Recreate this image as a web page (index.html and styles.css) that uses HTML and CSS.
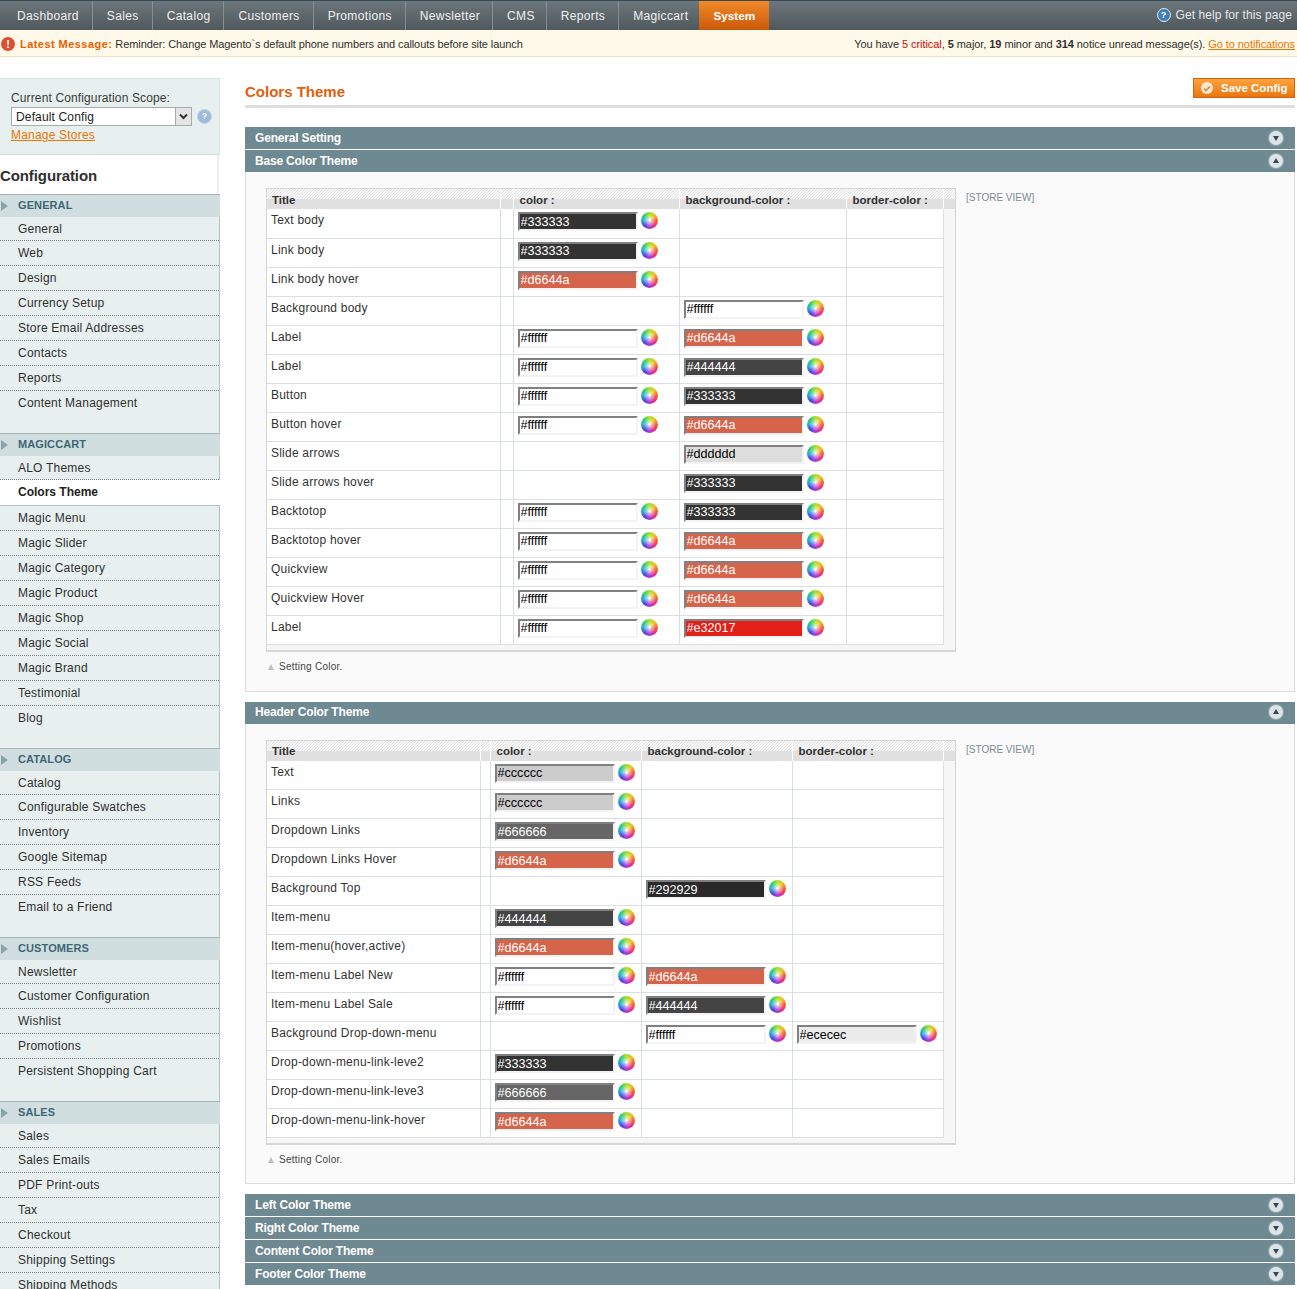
FILE: index.html
```html
<!DOCTYPE html>
<html>
<head>
  <title>Colors Theme / Configuration</title>
  <link rel="stylesheet" href="styles.css">
</head>
<body>
<div class="page">
  <div class="nav-bar">
    <ul class="nav-menu">
      <li>Dashboard</li>
      <li>Sales</li>
      <li>Catalog</li>
      <li>Customers</li>
      <li>Promotions</li>
      <li>Newsletter</li>
      <li>CMS</li>
      <li>Reports</li>
      <li>Magiccart</li>
      <li class="active">System</li>
    </ul>
    <div class="nav-help">
      <span class="help-icon">?</span>
      <span>Get help for this page</span>
    </div>
  </div>

  <div class="notice-bar">
    <div class="notice-left">
      <span class="notice-icon">!</span>
      <strong class="notice-title">Latest Message:</strong>
      <span>Reminder: Change Magento`s default phone numbers and callouts before site launch</span>
    </div>
    <div class="notice-right">
      You have <strong class="critical">5 critical</strong>, <strong>5</strong> major, <strong>19</strong> minor and <strong>314</strong> notice unread message(s). <a href="#">Go to notifications</a>
    </div>
  </div>

  <div class="columns">
    <div class="sidebar">
      <div class="scope-box">
        <div class="scope-label">Current Configuration Scope:</div>
        <div class="scope-row">
          <div class="scope-select">
            <span class="scope-value">Default Config</span>
            <span class="scope-arrow">
              <svg width="9" height="7" viewBox="0 0 9 7"><path d="M1 1.5l3.5 3.5 3.5-3.5" fill="none" stroke="#333" stroke-width="2"/></svg>
            </span>
          </div>
          <span class="scope-help">?</span>
        </div>
        <a class="scope-link" href="#">Manage Stores</a>
      </div>

      <h3 class="side-title">Configuration</h3>

      <div class="side-group">
        <h4 class="side-head">GENERAL</h4>
        <ul class="side-list">
          <li>General</li>
          <li>Web</li>
          <li>Design</li>
          <li>Currency Setup</li>
          <li>Store Email Addresses</li>
          <li>Contacts</li>
          <li>Reports</li>
          <li>Content Management</li>
        </ul>
      </div>

      <div class="side-group">
        <h4 class="side-head">MAGICCART</h4>
        <ul class="side-list">
          <li>ALO Themes</li>
          <li class="current">Colors Theme</li>
          <li>Magic Menu</li>
          <li>Magic Slider</li>
          <li>Magic Category</li>
          <li>Magic Product</li>
          <li>Magic Shop</li>
          <li>Magic Social</li>
          <li>Magic Brand</li>
          <li>Testimonial</li>
          <li>Blog</li>
        </ul>
      </div>

      <div class="side-group">
        <h4 class="side-head">CATALOG</h4>
        <ul class="side-list">
          <li>Catalog</li>
          <li>Configurable Swatches</li>
          <li>Inventory</li>
          <li>Google Sitemap</li>
          <li>RSS Feeds</li>
          <li>Email to a Friend</li>
        </ul>
      </div>

      <div class="side-group">
        <h4 class="side-head">CUSTOMERS</h4>
        <ul class="side-list">
          <li>Newsletter</li>
          <li>Customer Configuration</li>
          <li>Wishlist</li>
          <li>Promotions</li>
          <li>Persistent Shopping Cart</li>
        </ul>
      </div>

      <div class="side-group">
        <h4 class="side-head">SALES</h4>
        <ul class="side-list">
          <li>Sales</li>
          <li>Sales Emails</li>
          <li>PDF Print-outs</li>
          <li>Tax</li>
          <li>Checkout</li>
          <li>Shipping Settings</li>
          <li>Shipping Methods</li>
        </ul>
      </div>
    </div>

    <div class="main">
      <div class="content-header">
        <h3 class="page-title">Colors Theme</h3>
        <button class="save-button" type="button">
          <span class="save-icon">
            <svg width="8" height="7" viewBox="0 0 8 7"><path d="M1 3.5l2 2 4-4" fill="none" stroke="#e8842a" stroke-width="1.6"/></svg>
          </span>
          Save Config
        </button>
      </div>

      <div class="bar"><span>General Setting</span><span class="toggle"></span></div>
      <div class="bar"><span>Base Color Theme</span><span class="toggle open"></span></div>
      <div class="panel">
        <div class="table-row">
          <div class="table-wrap">
            <table class="color-table base-table">
              <thead>
                <tr><th>Title</th><th class="gap"></th><th>color :</th><th>background-color :</th><th>border-color :</th><th class="end"></th></tr>
              </thead>
              <tbody>
                <tr><td>Text body</td><td></td><td><input class="color-input c-333333" value="#333333"><i class="wheel"></i></td><td></td><td></td><td class="end"></td></tr>
                <tr><td>Link body</td><td></td><td><input class="color-input c-333333" value="#333333"><i class="wheel"></i></td><td></td><td></td><td class="end"></td></tr>
                <tr><td>Link body hover</td><td></td><td><input class="color-input c-d6644a" value="#d6644a"><i class="wheel"></i></td><td></td><td></td><td class="end"></td></tr>
                <tr><td>Background body</td><td></td><td></td><td><input class="color-input c-ffffff" value="#ffffff"><i class="wheel"></i></td><td></td><td class="end"></td></tr>
                <tr><td>Label</td><td></td><td><input class="color-input c-ffffff" value="#ffffff"><i class="wheel"></i></td><td><input class="color-input c-d6644a" value="#d6644a"><i class="wheel"></i></td><td></td><td class="end"></td></tr>
                <tr><td>Label</td><td></td><td><input class="color-input c-ffffff" value="#ffffff"><i class="wheel"></i></td><td><input class="color-input c-444444" value="#444444"><i class="wheel"></i></td><td></td><td class="end"></td></tr>
                <tr><td>Button</td><td></td><td><input class="color-input c-ffffff" value="#ffffff"><i class="wheel"></i></td><td><input class="color-input c-333333" value="#333333"><i class="wheel"></i></td><td></td><td class="end"></td></tr>
                <tr><td>Button hover</td><td></td><td><input class="color-input c-ffffff" value="#ffffff"><i class="wheel"></i></td><td><input class="color-input c-d6644a" value="#d6644a"><i class="wheel"></i></td><td></td><td class="end"></td></tr>
                <tr><td>Slide arrows</td><td></td><td></td><td><input class="color-input c-dddddd" value="#dddddd"><i class="wheel"></i></td><td></td><td class="end"></td></tr>
                <tr><td>Slide arrows hover</td><td></td><td></td><td><input class="color-input c-333333" value="#333333"><i class="wheel"></i></td><td></td><td class="end"></td></tr>
                <tr><td>Backtotop</td><td></td><td><input class="color-input c-ffffff" value="#ffffff"><i class="wheel"></i></td><td><input class="color-input c-333333" value="#333333"><i class="wheel"></i></td><td></td><td class="end"></td></tr>
                <tr><td>Backtotop hover</td><td></td><td><input class="color-input c-ffffff" value="#ffffff"><i class="wheel"></i></td><td><input class="color-input c-d6644a" value="#d6644a"><i class="wheel"></i></td><td></td><td class="end"></td></tr>
                <tr><td>Quickview</td><td></td><td><input class="color-input c-ffffff" value="#ffffff"><i class="wheel"></i></td><td><input class="color-input c-d6644a" value="#d6644a"><i class="wheel"></i></td><td></td><td class="end"></td></tr>
                <tr><td>Quickview Hover</td><td></td><td><input class="color-input c-ffffff" value="#ffffff"><i class="wheel"></i></td><td><input class="color-input c-d6644a" value="#d6644a"><i class="wheel"></i></td><td></td><td class="end"></td></tr>
                <tr><td>Label</td><td></td><td><input class="color-input c-ffffff" value="#ffffff"><i class="wheel"></i></td><td><input class="color-input c-e32017" value="#e32017"><i class="wheel"></i></td><td></td><td class="end"></td></tr>
              </tbody>
            </table>
          </div>
          <div class="store-view">[STORE VIEW]</div>
        </div>
        <p class="note">Setting Color.</p>
      </div>

      <div class="bar"><span>Header Color Theme</span><span class="toggle open"></span></div>
      <div class="panel">
        <div class="table-row">
          <div class="table-wrap">
            <table class="color-table header-table">
              <thead>
                <tr><th>Title</th><th class="gap"></th><th>color :</th><th>background-color :</th><th>border-color :</th><th class="end"></th></tr>
              </thead>
              <tbody>
                <tr><td>Text</td><td></td><td><input class="color-input c-cccccc" value="#cccccc"><i class="wheel"></i></td><td></td><td></td><td class="end"></td></tr>
                <tr><td>Links</td><td></td><td><input class="color-input c-cccccc" value="#cccccc"><i class="wheel"></i></td><td></td><td></td><td class="end"></td></tr>
                <tr><td>Dropdown Links</td><td></td><td><input class="color-input c-666666" value="#666666"><i class="wheel"></i></td><td></td><td></td><td class="end"></td></tr>
                <tr><td>Dropdown Links Hover</td><td></td><td><input class="color-input c-d6644a" value="#d6644a"><i class="wheel"></i></td><td></td><td></td><td class="end"></td></tr>
                <tr><td>Background Top</td><td></td><td></td><td><input class="color-input c-292929" value="#292929"><i class="wheel"></i></td><td></td><td class="end"></td></tr>
                <tr><td>Item-menu</td><td></td><td><input class="color-input c-444444" value="#444444"><i class="wheel"></i></td><td></td><td></td><td class="end"></td></tr>
                <tr><td>Item-menu(hover,active)</td><td></td><td><input class="color-input c-d6644a" value="#d6644a"><i class="wheel"></i></td><td></td><td></td><td class="end"></td></tr>
                <tr><td>Item-menu Label New</td><td></td><td><input class="color-input c-ffffff" value="#ffffff"><i class="wheel"></i></td><td><input class="color-input c-d6644a" value="#d6644a"><i class="wheel"></i></td><td></td><td class="end"></td></tr>
                <tr><td>Item-menu Label Sale</td><td></td><td><input class="color-input c-ffffff" value="#ffffff"><i class="wheel"></i></td><td><input class="color-input c-444444" value="#444444"><i class="wheel"></i></td><td></td><td class="end"></td></tr>
                <tr><td>Background Drop-down-menu</td><td></td><td></td><td><input class="color-input c-ffffff" value="#ffffff"><i class="wheel"></i></td><td><input class="color-input c-ececec" value="#ececec"><i class="wheel"></i></td><td class="end"></td></tr>
                <tr><td>Drop-down-menu-link-leve2</td><td></td><td><input class="color-input c-333333" value="#333333"><i class="wheel"></i></td><td></td><td></td><td class="end"></td></tr>
                <tr><td>Drop-down-menu-link-leve3</td><td></td><td><input class="color-input c-666666" value="#666666"><i class="wheel"></i></td><td></td><td></td><td class="end"></td></tr>
                <tr><td>Drop-down-menu-link-hover</td><td></td><td><input class="color-input c-d6644a" value="#d6644a"><i class="wheel"></i></td><td></td><td></td><td class="end"></td></tr>
              </tbody>
            </table>
          </div>
          <div class="store-view">[STORE VIEW]</div>
        </div>
        <p class="note note-short">Setting Color.</p>
      </div>

      <div class="bar"><span>Left Color Theme</span><span class="toggle"></span></div>
      <div class="bar"><span>Right Color Theme</span><span class="toggle"></span></div>
      <div class="bar"><span>Content Color Theme</span><span class="toggle"></span></div>
      <div class="bar"><span>Footer Color Theme</span><span class="toggle"></span></div>
    </div>
  </div>
</div>
</body>
</html>
```

FILE: styles.css
```css
html, body {
  margin: 0;
  padding: 0;
}

body {
  font-family: "Liberation Sans", Arial, sans-serif;
  font-size: 12px;
  color: #2f2f2f;
  background-color: #fff;
}

ul {
  list-style: none;
  margin: 0;
  padding: 0;
}

.page {
  height: 1289px;
  overflow: hidden;
}

/* top navigation */
.nav-bar {
  display: flex;
  justify-content: space-between;
  height: 29px;
  border-top: 1px solid #2f4a55;
  background: linear-gradient(#6d767b, #4f585d);
  color: #f0f0f0;
  letter-spacing: .35px;
}

.nav-menu {
  display: flex;
}

.nav-menu li {
  padding: 0 13px 0 14px;
  border-right: 1px solid #868e92;
  line-height: 30px;
}

.nav-menu li:first-child {
  padding-left: 17px;
}

.nav-menu li:nth-child(6) {
  padding-right: 12px;
}

.nav-menu li:nth-child(7),
.nav-menu li:nth-child(9) {
  padding-right: 11px;
}

.nav-menu li:nth-child(9) {
  border-right: 0;
}

.nav-menu li.active {
  padding: 0 14px;
  border-right: 0;
  background: linear-gradient(#f18a2a, #c9590a);
  color: #fff;
  font-size: 11.8px;
  font-weight: bold;
  letter-spacing: 0;
}

.nav-help {
  display: flex;
  align-items: center;
  gap: 5px;
  padding-right: 5px;
  height: 27px;
  color: #e6e6e6;
  letter-spacing: .08px;
}

.help-icon {
  width: 12px;
  height: 12px;
  border-radius: 50%;
  border: 1px solid #dfeaf2;
  background-color: #3f7fb8;
  color: #fff;
  font-size: 9px;
  font-weight: bold;
  line-height: 12px;
  text-align: center;
  letter-spacing: 0;
}

/* message bar */
.notice-bar {
  display: flex;
  justify-content: space-between;
  align-items: center;
  height: 27px;
  border-bottom: 1px solid #eee2be;
  background-color: #fff9e9;
  font-size: 11px;
  letter-spacing: -.07px;
  box-sizing: border-box;
  padding: 1px 2px 0 1px;
}

.notice-left {
  display: flex;
  align-items: center;
  letter-spacing: -.09px;
}

.notice-icon {
  width: 14px;
  height: 14px;
  margin-right: 5px;
  border-radius: 50%;
  background-color: #d9502e;
  color: #fff;
  font-weight: bold;
  line-height: 14px;
  text-align: center;
}

.notice-title {
  margin-right: 3px;
  color: #eb5e00;
  letter-spacing: .45px;
}

.critical {
  color: #d40707;
  font-weight: normal;
}

.notice-right a {
  color: #ea7601;
}

/* page columns */
.columns {
  display: flex;
  gap: 25px;
  padding-top: 21px;
}

.sidebar {
  flex: 0 0 220px;
  width: 220px;
}

.main {
  flex: 0 0 1050px;
  width: 1050px;
}

/* scope switcher */
.scope-box {
  box-sizing: border-box;
  height: 77px;
  padding: 12px 0 0 11px;
  border: 1px solid #d6dfdf;
  border-left: 0;
  background-color: #e7efef;
}

.scope-label {
  line-height: 14px;
  letter-spacing: .13px;
  color: #3a3a3a;
}

.scope-row {
  display: flex;
  align-items: center;
  gap: 5px;
  margin-top: 2px;
}

.scope-select {
  display: flex;
  justify-content: space-between;
  box-sizing: border-box;
  flex: 0 0 181px;
  height: 19px;
  border: 1px solid #aaa;
  background-color: #fff;
}

.scope-value {
  padding-left: 4px;
  line-height: 18px;
  color: #222;
  letter-spacing: .15px;
}

.scope-arrow {
  display: flex;
  align-items: center;
  justify-content: center;
  width: 15px;
  border-left: 1px solid #aaa;
  background-color: #e4e4e4;
}

.scope-help {
  width: 13px;
  height: 13px;
  border-radius: 50%;
  border: 1px solid #c3d5e6;
  background-color: #9dbcd9;
  color: #fff;
  font-size: 9px;
  font-weight: bold;
  line-height: 13px;
  text-align: center;
}

.scope-link {
  display: block;
  margin-top: 2px;
  color: #ea7601;
  line-height: 15px;
  letter-spacing: .2px;
}

/* sidebar menu */
.side-title {
  box-sizing: border-box;
  height: 39px;
  margin: 0;
  border-right: 2px solid #eee;
  width: 219px;
  color: #2f2f2f;
  font-size: 15px;
  line-height: 42px;
  letter-spacing: -.1px;
}

.side-head {
  position: relative;
  box-sizing: border-box;
  height: 23px;
  margin: 0;
  padding-left: 18px;
  border-top: 1px solid #a4b4b4;
  background-color: #d1dedf;
  color: #3d6776;
  font-size: 11px;
  line-height: 20px;
  letter-spacing: .1px;
}

.side-head::before {
  content: "";
  position: absolute;
  left: 1px;
  top: 6px;
  border-left: 7px solid #8aa3a8;
  border-top: 5px solid transparent;
  border-bottom: 5px solid transparent;
}

.side-list {
  padding-bottom: 17px;
  border-right: 1px solid #b5c2c2;
  background-color: #e7efef;
}

.side-group:first-of-type .side-list {
  padding-bottom: 16px;
}

.side-list li {
  box-sizing: border-box;
  height: 25px;
  padding-left: 18px;
  border-bottom: 1px dotted #777;
  color: #2f2f2f;
  line-height: 25px;
  letter-spacing: .22px;
}

.side-list li:first-child {
  height: 24px;
  line-height: 24px;
}

.side-list li:last-child {
  border-bottom: 0;
}

.side-list li.current {
  height: 26px;
  margin-right: -1px;
  border-bottom: 1px solid #b5c2c2;
  background-color: #fff;
  font-weight: bold;
  color: #222;
  letter-spacing: 0;
}

/* page heading */
.content-header {
  display: flex;
  justify-content: space-between;
  box-sizing: border-box;
  height: 30px;
  margin-bottom: 19px;
  border-bottom: 3px solid #dfdfdf;
}

.page-title {
  margin: 4px 0 0;
  color: #e2600a;
  font-size: 15px;
  line-height: 20px;
}

.save-button {
  display: flex;
  align-items: center;
  gap: 8px;
  box-sizing: border-box;
  width: 102px;
  height: 20px;
  padding: 0 0 0 7px;
  border: 1px solid #d2650b;
  background: linear-gradient(#ffa43f, #e9760f);
  color: #fff;
  font-family: inherit;
  font-size: 11.5px;
  font-weight: bold;
}

.save-icon {
  display: flex;
  align-items: center;
  justify-content: center;
  width: 12px;
  height: 12px;
  border-radius: 50%;
  background-color: #fbe9d4;
}

/* section bars */
.bar {
  display: flex;
  justify-content: space-between;
  align-items: center;
  box-sizing: border-box;
  height: 22px;
  margin-bottom: 1px;
  padding: 0 12px 1px 10px;
  background-color: #6f8992;
  color: #fff;
  font-weight: bold;
  letter-spacing: -.18px;
}

.toggle {
  position: relative;
  width: 14px;
  height: 14px;
  border-radius: 50%;
  background-color: #dce4e8;
  box-shadow: 0 0 1px 1px #93a8af;
}

.toggle::after {
  content: "";
  position: absolute;
  left: 3.5px;
  top: 5px;
  border-top: 5px solid #2f4a55;
  border-left: 3.5px solid transparent;
  border-right: 3.5px solid transparent;
}

.toggle.open::after {
  top: 4px;
  border-top: 0;
  border-bottom: 5px solid #2f4a55;
}

/* section panel */
.panel {
  box-sizing: border-box;
  margin: -1px 0 10px;
  padding: 16px 20px 0;
  border: 1px solid #dcdcdc;
  border-top: 0;
  background-color: #fafafa;
}

.table-row {
  display: flex;
  gap: 10px;
}

.table-wrap {
  flex: 0 0 auto;
  padding-bottom: 5px;
  border: 1px solid #d6d6d6;
  border-bottom-width: 2px;
  background-color: #f6f6f6;
}

.color-table {
  border-collapse: collapse;
  table-layout: fixed;
  width: 688px;
}

.color-table th {
  height: 20px;
  padding: 1px 0 0 5px;
  border-right: 1px solid #fff;
  box-sizing: border-box;
  background:
    repeating-linear-gradient(135deg, #fafafa 0 1.06px, #e0e0e0 1.06px 2.12px) 0 0 / 100% 10px no-repeat,
    #e0e0e0;
  color: #333;
  font-size: 11.5px;
  text-align: left;
}

.color-table th:nth-child(n+3) {
  padding-left: 6px;
}

.color-table th.end {
  border-right: 0;
}

.color-table td {
  box-sizing: border-box;
  height: 29px;
  padding: 3px 0 0 4px;
  border-right: 1px solid #dadfe0;
  border-bottom: 1px solid #dadfe0;
  background-color: #fff;
  color: #333;
  line-height: 17px;
  letter-spacing: .22px;
  vertical-align: top;
}

.color-table td.end {
  padding: 0;
  border: 0;
  background-color: transparent;
}

.base-table th:nth-child(1) { width: 233px; }
.base-table th:nth-child(2) { width: 13px; }
.base-table th:nth-child(3) { width: 166px; }
.base-table th:nth-child(4) { width: 167px; }
.base-table th:nth-child(5) { width: 97px; }

.header-table th:nth-child(1) { width: 213px; }
.header-table th:nth-child(2) { width: 10px; }
.header-table th:nth-child(3) { width: 151px; }
.header-table th:nth-child(4) { width: 151px; }
.header-table th:nth-child(5) { width: 151px; }

.color-input {
  box-sizing: border-box;
  width: 120px;
  height: 19px;
  margin: 0;
  padding: 0 0 0 1px;
  border-style: solid;
  border-width: 2px;
  border-color: #808080 #f3f3f3 #f3f3f3 #808080;
  font-family: inherit;
  font-size: 12.6px;
  letter-spacing: 0;
  vertical-align: top;
}

.wheel {
  display: inline-block;
  width: 17px;
  height: 17px;
  margin: 0 0 0 3px;
  border-radius: 50%;
  vertical-align: top;
  background:
    radial-gradient(circle, #fff 0, rgba(255, 255, 255, .6) 18%, rgba(255, 255, 255, 0) 55%),
    conic-gradient(#a8e030, #f2c020, #f06030, #ea2f80, #a838d8, #4848e0, #28a8e0, #30d070, #a8e030);
}

.c-333333 { background-color: #333333; color: #fff; }
.c-292929 { background-color: #292929; color: #fff; }
.c-444444 { background-color: #444444; color: #fff; }
.c-666666 { background-color: #666666; color: #fff; }
.c-d6644a { background-color: #d6644a; color: #fff; }
.c-e32017 { background-color: #e32017; color: #fff; }
.c-cccccc { background-color: #cccccc; color: #000; }
.c-dddddd { background-color: #dddddd; color: #000; }
.c-ececec { background-color: #ececec; color: #000; }
.c-ffffff { background-color: #ffffff; color: #000; }

.store-view {
  padding-top: 4px;
  color: #7d8b90;
  font-size: 10px;
  line-height: 12px;
}

.note {
  position: relative;
  margin: 0;
  height: 39px;
  padding: 8px 0 0 13px;
  box-sizing: border-box;
  color: #444;
  font-size: 10px;
  line-height: 14px;
  letter-spacing: .25px;
}

.note-short {
  height: 38px;
}

.note::before {
  content: "";
  position: absolute;
  left: 2px;
  top: 12px;
  border-bottom: 6px solid #b4c2c4;
  border-left: 3.5px solid transparent;
  border-right: 3.5px solid transparent;
}
```
